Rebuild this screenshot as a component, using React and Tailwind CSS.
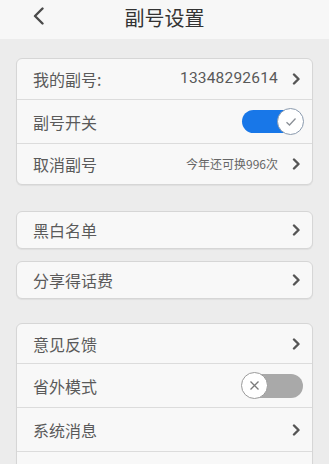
import React from "react";

const font = { fontFamily: '"Noto Sans CJK SC", "Noto Sans", sans-serif' };

function Chevron() {
  return (
    <svg width="9" height="12" viewBox="0 0 9 12" className="shrink-0">
      <path d="M2 1.5 L6.5 6 L2 10.5" fill="none" stroke="#555" strokeWidth="2.4" strokeLinecap="round" strokeLinejoin="round" />
    </svg>
  );
}

function ToggleOn() {
  return (
    <div className="w-[61px] h-[23px] rounded-full bg-[#1877e8] relative shrink-0">
      <div className="absolute right-[-1px] top-[-2px] w-[27px] h-[27px] rounded-full bg-white border border-[#8a9aae] flex items-center justify-center">
        <svg width="12" height="10" viewBox="0 0 12 10">
          <path d="M1.5 5.2 L4.5 8 L10.5 1.5" fill="none" stroke="#8a8f96" strokeWidth="1.3" />
        </svg>
      </div>
    </div>
  );
}

function ToggleOff() {
  return (
    <div className="w-[61px] h-[24px] rounded-full bg-[#a9a9a9] relative shrink-0">
      <div className="absolute left-[-1px] top-[-2px] w-[27px] h-[27px] rounded-full bg-white border border-[#9a9a9a] flex items-center justify-center">
        <svg width="11" height="11" viewBox="0 0 11 11">
          <path d="M1.5 1.5 L9.5 9.5 M9.5 1.5 L1.5 9.5" fill="none" stroke="#7a7a7a" strokeWidth="1.3" />
        </svg>
      </div>
    </div>
  );
}

function Row({ label, right, h, last, pr = "pr-[11px]" }) {
  return (
    <div className={`flex items-center justify-between pl-[16px] ${pr} ${h} ${last ? "" : "border-b border-[#dcdcdc]"}`}>
      <span className="text-[16px] text-[#5a5a5a] leading-none">{label}</span>
      {right}
    </div>
  );
}

function Card({ children, className = "" }) {
  return (
    <div className={`mx-[16px] bg-[#f8f8f8] border border-[#d6d6d6] rounded-[6px] shadow-[0_1px_1px_rgba(0,0,0,0.06)] ${className}`}>
      {children}
    </div>
  );
}

export default function App() {
  return (
    <div className="w-[329px] h-[464px] overflow-hidden bg-[#ececec]" style={font}>
      <div className="h-[39px] bg-[#f7f7f7] relative flex items-center justify-center">
        <svg width="14" height="18" viewBox="0 0 14 18" className="absolute left-[32px] top-[7px]">
          <path d="M10.5 1.5 L3 9 L10.5 16.5" fill="none" stroke="#4a4a4a" strokeWidth="2.4" strokeLinecap="round" strokeLinejoin="round" />
        </svg>
        <span className="text-[20px] text-[#333] leading-none mb-[3px]">副号设置</span>
      </div>

      <Card className="mt-[19px]">
        <Row
          label="我的副号:"
          h="h-[41px]"
          right={
            <div className="flex items-center gap-[14px]">
              <span className="text-[15.5px] text-[#595959] tracking-[0.2px]" style={{ fontFamily: "Roboto, sans-serif" }}>13348292614</span>
              <Chevron />
            </div>
          }
        />
        <Row label="副号开关" h="h-[44px]" pr="pr-[9px]" right={<ToggleOn />} />
        <Row
          label="取消副号"
          h="h-[40px]"
          last
          right={
            <div className="flex items-center gap-[14px]">
              <span className="text-[12px] text-[#666]">今年还可换996次</span>
              <Chevron />
            </div>
          }
        />
      </Card>

      <Card className="mt-[26px]">
        <Row label="黑白名单" h="h-[36px]" last right={<Chevron />} />
      </Card>

      <Card className="mt-[12px]">
        <Row label="分享得话费" h="h-[36px]" last right={<Chevron />} />
      </Card>

      <Card className="mt-[24px]">
        <Row label="意见反馈" h="h-[40px]" right={<Chevron />} />
        <Row label="省外模式" h="h-[44px]" pr="pr-[9px]" right={<ToggleOff />} />
        <Row label="系统消息" h="h-[44px]" right={<Chevron />} />
        <div className="h-[44px]" />
      </Card>
    </div>
  );
}
